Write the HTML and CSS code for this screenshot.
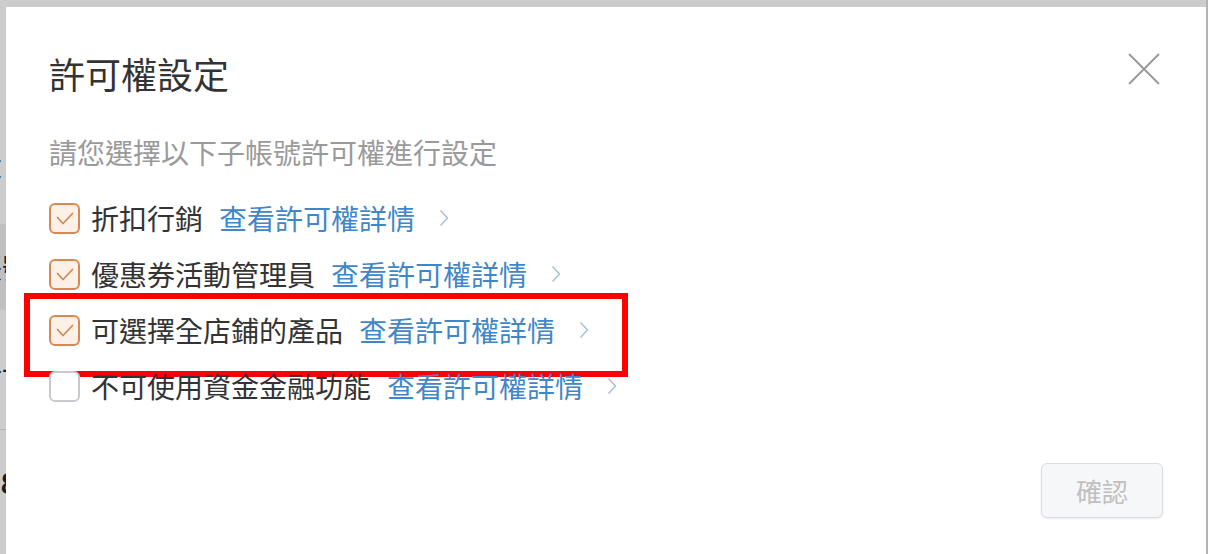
FILE: index.html
```html
<!DOCTYPE html>
<html lang="zh-Hant">
<head>
<meta charset="utf-8">
<title>許可權設定</title>
<link rel="stylesheet" href="styles.css">
</head>
<body>
<div class="page">
  <div class="p-top"><span class="frag">設：</span></div>
  <div class="p-head"><span class="frag">帳號</span></div>
  <div class="p-row"><span class="frag">子一</span></div>
  <div class="p-row p-row-last"><span class="frag frag-num">28</span></div>
</div>
<div class="mask"></div>
<div class="scrollbar"></div>
<div class="modal">
  <div class="modal-head">
    <h2 class="modal-title">許可權設定</h2>
    <button class="close" aria-label="關閉">
      <svg width="32" height="32" viewBox="0 0 32 32"><path d="M1 1 L31 31 M31 1 L1 31" stroke="#9a9a9a" stroke-width="2" fill="none"/></svg>
    </button>
  </div>
  <p class="desc">請您選擇以下子帳號許可權進行設定</p>
  <ul class="perm-list">
    <li class="perm">
      <span class="cb cb-on"><svg width="31" height="31" viewBox="0 0 31 31"><polyline points="8.5,14.5 14,20.5 23.5,10.5" fill="none" stroke="#d3874f" stroke-width="1.7" stroke-linecap="round" stroke-linejoin="round"/></svg></span>
      <span class="label">折扣行銷</span>
      <a class="link">查看許可權詳情</a>
      <svg class="chev" width="10" height="18" viewBox="0 0 10 18"><polyline points="1.5,1.5 8.5,9 1.5,16.5" fill="none" stroke="#a3bfdc" stroke-width="1.4"/></svg>
    </li>
    <li class="perm">
      <span class="cb cb-on"><svg width="31" height="31" viewBox="0 0 31 31"><polyline points="8.5,14.5 14,20.5 23.5,10.5" fill="none" stroke="#d3874f" stroke-width="1.7" stroke-linecap="round" stroke-linejoin="round"/></svg></span>
      <span class="label">優惠券活動管理員</span>
      <a class="link">查看許可權詳情</a>
      <svg class="chev" width="10" height="18" viewBox="0 0 10 18"><polyline points="1.5,1.5 8.5,9 1.5,16.5" fill="none" stroke="#a3bfdc" stroke-width="1.4"/></svg>
    </li>
    <li class="perm perm-mark">
      <span class="cb cb-on"><svg width="31" height="31" viewBox="0 0 31 31"><polyline points="8.5,14.5 14,20.5 23.5,10.5" fill="none" stroke="#d3874f" stroke-width="1.7" stroke-linecap="round" stroke-linejoin="round"/></svg></span>
      <span class="label">可選擇全店鋪的產品</span>
      <a class="link">查看許可權詳情</a>
      <svg class="chev" width="10" height="18" viewBox="0 0 10 18"><polyline points="1.5,1.5 8.5,9 1.5,16.5" fill="none" stroke="#a3bfdc" stroke-width="1.4"/></svg>
    </li>
    <li class="perm">
      <span class="cb"></span>
      <span class="label">不可使用資金金融功能</span>
      <a class="link">查看許可權詳情</a>
      <svg class="chev" width="10" height="18" viewBox="0 0 10 18"><polyline points="1.5,1.5 8.5,9 1.5,16.5" fill="none" stroke="#a3bfdc" stroke-width="1.4"/></svg>
    </li>
  </ul>
  <div class="footer">
    <button class="confirm">確認</button>
  </div>
</div>
</body>
</html>
```

FILE: styles.css
```css
* { box-sizing: border-box; }
html, body { margin: 0; padding: 0; }
body {
  width: 1208px;
  height: 554px;
  overflow: hidden;
  background: #fff;
  font-family: "Noto Sans CJK TC", "Noto Sans", sans-serif;
  color: #333;
}

/* background page (under the mask) */
.page {
  display: flex;
  flex-direction: column;
}
.p-top {
  height: 224px;
  padding-top: 148px;
}
.p-head {
  height: 86px;
  background: #f1f1f4;
  display: flex;
  align-items: center;
}
.p-row {
  height: 120px;
  display: flex;
  align-items: center;
  border-bottom: 1px solid #e4e4e4;
}
.p-row-last {
  height: 124px;
  border-bottom: none;
  align-items: flex-start;
  padding-top: 36px;
}
.frag {
  display: block;
  margin-left: -26px;
  font-size: 28px;
  line-height: 32px;
  color: #222;
}
.frag-num {
  margin-left: -16px;
  font-weight: 700;
}

.mask {
  position: fixed;
  inset: 0;
  background: rgba(0, 0, 0, 0.2);
}
.scrollbar {
  position: fixed;
  top: 0;
  right: 0;
  width: 2px;
  height: 554px;
  background: #b3b3b3;
}

/* modal */
.modal {
  position: fixed;
  left: 6px;
  top: 7px;
  width: 1200px;
  height: 620px;
  background: #fff;
  padding: 41px 43px 0 43px;
}
.modal-head {
  display: flex;
  justify-content: space-between;
  align-items: flex-start;
}
.modal-title {
  margin: 0;
  font-size: 36px;
  line-height: 50px;
  font-weight: 400;
  color: #333;
}
.close {
  margin: 5px 3px 0 0;
  padding: 0;
  border: none;
  background: none;
  width: 32px;
  height: 32px;
  display: block;
}
.close svg { display: block; }

.desc {
  margin: 34px 0 0 0;
  font-size: 28px;
  line-height: 40px;
  color: #9a9a9a;
}

.perm-list {
  list-style: none;
  margin: 18px 0 0 0;
  padding: 0;
}
.perm {
  position: relative;
  height: 56px;
  display: flex;
  align-items: center;
}
.cb {
  width: 31px;
  height: 31px;
  flex: none;
  border: 2px solid #c9c9cf;
  border-radius: 6px;
  background: #fff;
  position: relative;
  overflow: hidden;
}
.cb svg {
  position: absolute;
  left: -2px;
  top: -2px;
  display: block;
}
.cb-on {
  border-color: #d58a55;
  background: #fdf0e6;
}
.label {
  margin-left: 11px;
  font-size: 28px;
  line-height: 40px;
  color: #333;
}
.link {
  margin-left: 16px;
  font-size: 28px;
  line-height: 40px;
  color: #3f87c8;
  cursor: pointer;
}
.chev {
  margin-left: 24px;
  display: block;
  flex: none;
}
.perm-mark::after {
  content: "";
  position: absolute;
  left: -25px;
  top: -9px;
  width: 592px;
  height: 72px;
  border: 6px solid #ff0000;
  pointer-events: none;
}

.footer {
  margin-top: 49px;
  display: flex;
  justify-content: flex-end;
}
.confirm {
  width: 122px;
  height: 55px;
  border: 1px solid #dcdcdf;
  border-radius: 6px;
  background: #f6f7f9;
  color: #c0c0c0;
  font-family: "Noto Sans CJK TC", "Noto Sans", sans-serif;
  font-size: 26px;
  box-shadow: 0 1px 2px rgba(0, 0, 0, 0.08);
  padding: 0;
}
```
